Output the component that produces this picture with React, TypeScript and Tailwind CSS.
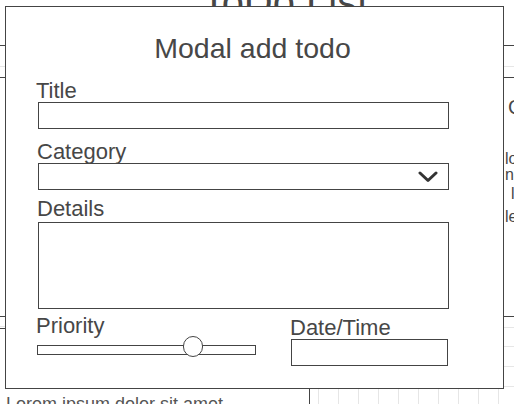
export default function App() {
  const cols = Array.from({ length: 12 });
  const rows = Array.from({ length: 4 });

  return (
    <div className="relative h-[404px] w-[514px] overflow-hidden bg-white font-['Liberation_Sans',Arial,sans-serif] text-[#474747]">
      {/* Background page */}
      <div className="w-[570px]">
        <div className="flex h-[46px] justify-center border-b border-[#444]">
          <h1 className="mt-[-18px] text-[40px] leading-none">ToDo List</h1>
        </div>
        <div className="h-[32px] border-b border-[#444]">
          <div className="h-[21px] border-b border-[#e6e6e6]" />
        </div>

        <div className="flex h-[238px]">
          <div className="w-[503px] shrink-0" />
          <div className="min-w-0 flex-1 whitespace-nowrap pl-[5px] pt-[19px]">
            <p className="text-[20px] leading-none">Categories</p>
            <p className="mt-[34px] ml-[-3px] text-[16px] leading-none">lorem</p>
            <p className="ml-[-3px] text-[16px] leading-none">nisi</p>
            <p className="mt-[3px] ml-[3px] text-[16px] leading-none">lorem</p>
            <p className="mt-[7px] ml-[-3px] text-[16px] leading-none">lectus</p>
          </div>
        </div>

        {/* Bottom section */}
        <div className="flex border-t border-[#444]">
          <div className="w-[309px] shrink-0">
            <div className="h-[10px] border-b border-[#e6e6e6]" />
            <div className="h-[2px] border-b border-[#444]" />
            <p className="mt-[66px] whitespace-nowrap pl-[6px] text-[18px] leading-none text-[#555]">
              Lorem ipsum dolor sit amet
            </p>
          </div>
          <div className="flex-1 border-l border-[#444]">
            {["h-[11px]", "h-[19px]", "h-[20px]", "h-[20px]", "h-[20px]"].map((h, r) => (
              <div key={r} className={`flex ${h} ${r < rows.length ? "border-b border-[#e6e6e6]" : ""}`}>
                <div className="w-[8px] shrink-0" />
                {cols.map((_, c) => (
                  <div key={c} className="w-[20px] shrink-0 border-l border-[#e6e6e6]" />
                ))}
              </div>
            ))}
          </div>
        </div>
      </div>

      {/* Modal */}
      <div className="absolute left-[5px] top-[6px] h-[383px] w-[499px] border border-[#444] bg-white pt-[25px]">
        <h2 className="pr-[4px] text-center text-[28.5px] leading-[32px]">Modal add todo</h2>

        <div className="pl-[30px]">
          <label className="mt-[16px] block text-[22px] leading-none">Title</label>
          <div className="ml-[2px] h-[27px] w-[411px] border border-[#444]" />

          <label className="mt-[12px] ml-[1px] block text-[22px] leading-none">Category</label>
          <div className="ml-[2px] flex h-[27px] w-[411px] items-center justify-end border border-[#444] pr-[10px]">
            <svg width="20" height="12" viewBox="0 0 20 12" fill="none">
              <polyline
                points="2,2 10,9.5 18,2"
                stroke="#333"
                strokeWidth="3"
                strokeLinecap="round"
                strokeLinejoin="round"
              />
            </svg>
          </div>

          <label className="mt-[8px] ml-[1px] block text-[22px] leading-none">Details</label>
          <div className="ml-[2px] mt-[2px] h-[87px] w-[411px] border border-[#444]" />

          <div className="mt-[6px] flex">
            <div className="w-[254px] shrink-0">
              <label className="block text-[22px] leading-none">Priority</label>
              <div className="relative ml-[1px] mt-[8px] h-[10px] w-[219px] border border-[#444]">
                <div className="absolute left-[145px] top-[-10px] h-[21px] w-[20px] rounded-full border border-[#444] bg-white" />
              </div>
            </div>
            <div className="pt-[2px]">
              <label className="block text-[22px] leading-none">Date/Time</label>
              <div className="ml-[1px] h-[27px] w-[157px] border border-[#444]" />
            </div>
          </div>
        </div>
      </div>
    </div>
  );
}
